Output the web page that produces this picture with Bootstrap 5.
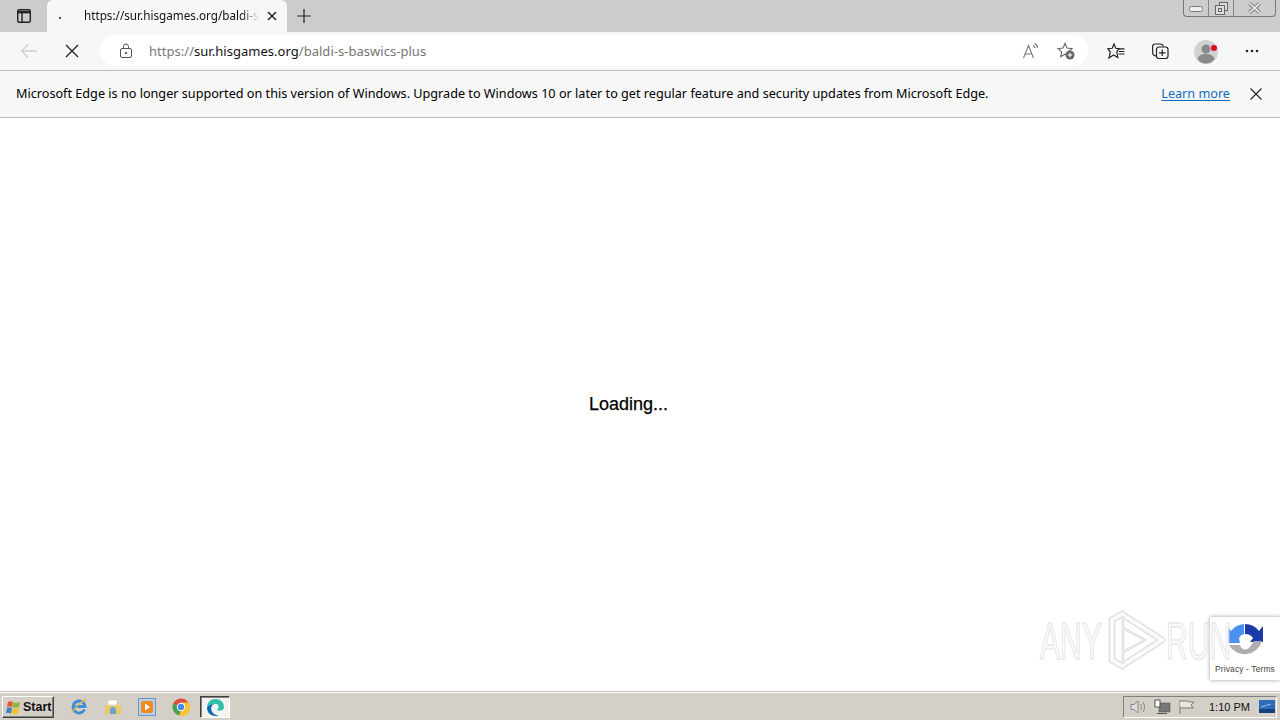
<!doctype html>
<html lang="en"><head><meta charset="utf-8"><title>Loading</title>
<link rel="stylesheet" href="https://cdn.jsdelivr.net/npm/bootstrap@5.3.0/dist/css/bootstrap.min.css">
<style>
html,body{height:720px;overflow:hidden;background:#fff}
body{font-family:"Noto Sans",sans-serif;color:#000}
.shell{height:720px}
.tabstrip{height:32px;background:#ccc;flex:none}
.sideicon{width:47px;flex:none}
.edgetab{width:240px;height:32px;background:#f7f7f7;border-radius:6px 6px 0 0;font-size:11.7px;padding:0 9px 0 12px;flex:none}
.tabdot{width:2px;height:2px;background:#555;margin-top:4px;flex:none}
.tabtitle{width:175px;margin-left:23px;white-space:nowrap;color:#111;-webkit-mask-image:linear-gradient(90deg,#000 90%,transparent);mask-image:linear-gradient(90deg,#000 90%,transparent);line-height:16px;margin-top:-2px}
.tabplus{margin-left:9px}
.winbtns{margin-left:auto;margin-right:4px;height:17px;width:93px;border:1px solid #777;border-top:0;border-radius:0 0 4px 4px;align-self:flex-start;flex:none}
.winbtns>div{border-right:1px solid #888}
.winbtns>div:last-child{border:0}
.toolbar{height:39px;background:#f7f7f7;border-bottom:1px solid #bdbdbd;flex:none;position:relative}
.navbtn{width:38px;flex:none}
.stopbtn{width:51px;padding-left:17px}
.addr{position:absolute;left:100px;top:3px;width:988px;height:31px;background:#fff;border-radius:15.5px;font-size:13px;padding-left:19px}
.urltxt{margin-left:16px;margin-top:2px;color:#767676;letter-spacing:.03px;white-space:nowrap}
.urlhost{color:#111}
.addrend{margin-left:auto;gap:17px;padding-right:13px}
.tools{position:absolute;left:1104px;top:0;height:38px;width:176px}
.slot{position:absolute}
.infobar{height:47px;background:#f7f7f7;border-bottom:1px solid #bdbdbd;font-size:12.65px;padding:0 18px 0 16px;flex:none}
.infotxt,.learn{margin-top:-2px}
.learn{color:#0f6cbd;margin-left:auto;margin-right:20px;text-underline-offset:2px}
.pagearea{flex:1 1 auto;position:relative;padding:0 23px 2px 0}
.loadtxt{font-family:"Liberation Sans",sans-serif;font-size:18px;line-height:22px;-webkit-text-stroke:.25px #000}
.wmark{position:absolute;left:1036px;top:490px;width:200px;height:64px;font-family:"Liberation Sans",sans-serif}
.wtxt{position:absolute;top:13px;font-size:52px;line-height:40px;color:rgba(248,248,248,.6);-webkit-text-stroke:2px rgba(228,228,228,.72);transform:scaleX(.58);transform-origin:0 0;white-space:nowrap}
.wtri{position:absolute;left:72px;top:2px}
.rcap{position:absolute;right:0;bottom:12px;width:70px;height:63px;background:#fff;box-shadow:0 0 4px rgba(0,0,0,.4);font-family:"Liberation Sans",sans-serif;font-size:8.5px;color:#444;padding-top:6px}
.rcap span{margin-top:3px;letter-spacing:.1px;line-height:10px}
.taskbar{height:28px;background:#d4d0c8;border-top:1px solid #fff;box-shadow:0 -1px 0 #c9c5bc;flex:none;font-family:"Liberation Sans",sans-serif}
.startbtn{margin:3px 0 0 2px;width:52px;height:22px;background:#d4d0c8;border:1px solid;border-color:#fff #404040 #404040 #fff;box-shadow:inset -1px -1px 0 #808080;font-weight:700;font-size:12.5px;padding-left:2px;gap:2px;color:#111}
.quick{margin-left:16px;gap:16px;padding-top:1px}
.quick>svg{flex:none}
.activeapp{width:30px;height:22px;margin-left:-6px;background:#f4f2ee;border:1px solid;border-color:#404040 #fff #fff #404040;box-shadow:inset 1px 1px 0 #808080}
.tray{margin-left:auto;margin-right:3px;margin-top:3px;height:22px;width:154px;border:1px solid;border-color:#808080 #fff #fff #808080;font-size:11px;position:relative;color:#111}
.tray>*{position:absolute}
</style></head>
<body>
<div class="shell d-flex flex-column">
  <div class="tabstrip d-flex align-items-center">
    <div class="sideicon d-flex justify-content-center">
      <svg width="16" height="16" viewBox="0 0 16 16" fill="none" stroke="#222" stroke-width="1.4"><rect x="1.7" y="1.7" width="12.6" height="12.6" rx="1.5"/><path d="M1.7 4.2h12.6" stroke-width="2.4"/><path d="M6 4v10"/></svg>
    </div>
    <div class="edgetab d-flex align-items-center">
      <span class="tabdot"></span>
      <span class="tabtitle">https://sur.hisgames.org/baldi-s</span>
      <svg class="ms-auto" width="12" height="12" viewBox="0 0 12 12" stroke="#222" stroke-width="1.5"><path d="M2 2l8 8M10 2l-8 8"/></svg>
    </div>
    <svg class="tabplus" width="16" height="16" viewBox="0 0 16 16" stroke="#222" stroke-width="1.2"><path d="M8 1v14M1 8h14"/></svg>
    <div class="winbtns d-flex">
      <div class="d-flex justify-content-center align-items-end pb-1" style="width:25px"><svg width="14" height="6" viewBox="0 0 14 6"><rect x=".5" y=".5" width="13" height="5" rx="2" fill="#eee" stroke="#777"/></svg></div>
      <div class="d-flex justify-content-center align-items-center" style="width:25px"><svg width="13" height="13" viewBox="0 0 13 13" fill="#ddd" stroke="#666"><rect x="4.5" y=".5" width="8" height="8"/><rect x=".5" y="3.5" width="9" height="9"/><rect x="3.5" y="6.5" width="3" height="3"/></svg></div>
      <div class="d-flex justify-content-center align-items-center flex-grow-1"><svg width="15" height="12" viewBox="0 0 15 12" stroke="#6a6a6a" stroke-width="3.6"><path d="M2.500 1.500l10 9M12.500 1.500l-10 9"/><path d="M2.500 1.500l10 9M12.500 1.500l-10 9" stroke="#e6e6e6" stroke-width="1.800"/></svg></div>
    </div>
  </div>
  <div class="toolbar d-flex align-items-center">
    <div class="navbtn d-flex justify-content-end"><svg width="18" height="16" viewBox="0 0 18 16" fill="none" stroke="#d0d0d0" stroke-width="1.3"><path d="M17 8H1.5M8 1.5L1.5 8 8 14.5"/></svg></div>
    <div class="stopbtn d-flex justify-content-center"><svg width="14" height="14" viewBox="0 0 14 14" stroke="#222" stroke-width="1.3"><path d="M1 1l12 12M13 1L1 13"/></svg></div>
    <div class="addr d-flex align-items-center">
      <svg width="14" height="16" viewBox="0 0 14 16" fill="none" stroke="#555"><rect x="1.5" y="5.5" width="11" height="9" rx="1.5"/><path d="M4.5 5.5V3.5a2.5 2.5 0 0 1 5 0v2"/><circle cx="7" cy="10" r=".8" fill="#555"/></svg>
      <span class="urltxt">https://<span class="urlhost">sur.hisgames.org</span>/baldi-s-baswics-plus</span>
      <div class="addrend d-flex align-items-center">
        <svg width="18" height="18" viewBox="0 0 18 18" fill="none" stroke="#777" stroke-width="1.1"><path d="M1.5 16L6.5 3.5 11.5 16M3.2 12h6.6"/><path d="M11 3.5a3 3 0 0 1 2 2.5M12.5 1.5a5 5 0 0 1 3 4.5"/></svg>
        <svg width="18" height="18" viewBox="0 0 18 18" fill="none" stroke="#666" stroke-width="1.1"><path d="M8 1.5l2 4.6 5 .5-3.7 3.3 1 4.8-4.3-2.500-4.300 2.500 1-4.800L1 6.600l5-.5z"/><circle cx="13" cy="13" r="4.500" fill="#666" stroke="none"/><path d="M13 10.800v4.400M10.800 13h4.400" stroke="#fff"/></svg>
      </div>
    </div>
    <div class="tools">
      <svg class="slot" style="left:3px;top:10px" width="18" height="18" viewBox="0 0 18 18" fill="none" stroke="#222" stroke-width="1.2"><path d="M7 2L8.800 6.300 12.200 6.800 9.800 10 10.800 15.500 6.500 13 2 16 3.300 10 .8 6.700 5.200 6.300z"/><path d="M12 6.800h5.500M12 9.500h5.500M11.500 12h6"/></svg>
      <svg class="slot" style="left:47px;top:10px" width="18" height="18" viewBox="0 0 18 18" fill="none" stroke="#222" stroke-width="1.2"><path d="M5 14C3 13.800 2 13 1.800 11.500L1.500 5C1.500 3 2.500 2 4.500 2h5C11 2 12 2.800 12.500 4.500"/><rect x="5.500" y="5" width="11.500" height="11.500" rx="2.500" fill="#f7f7f7"/><path d="M11.200 7.500v6.500M8 10.800h6.500"/></svg>
      <svg class="slot" style="left:90px;top:8px" width="24" height="24" viewBox="0 0 24 24"><circle cx="12" cy="12" r="12" fill="#cfd4d2"/><circle cx="12" cy="9" r="4.500" fill="#8a8a8a"/><path d="M3.500 19c1-4 4.500-5 8.500-5s7.500 1 8.500 5c-2 3-5 4.500-8.500 4.500S5.500 22 3.500 19z" fill="#8a8a8a"/><circle cx="20" cy="8" r="3" fill="#e00b1c"/></svg>
      <svg class="slot" style="left:141px;top:17px" width="14" height="4" viewBox="0 0 14 4" fill="#222"><circle cx="2" cy="2" r="1.300"/><circle cx="7" cy="2" r="1.300"/><circle cx="12" cy="2" r="1.300"/></svg>
    </div>
  </div>
  <div class="infobar d-flex align-items-center">
    <span class="infotxt">Microsoft Edge is no longer supported on this version of Windows. Upgrade to Windows 10 or later to get regular feature and security updates from Microsoft Edge.</span>
    <a class="learn" href="#">Learn more</a>
    <svg width="12" height="12" viewBox="0 0 12 12" stroke="#222" stroke-width="1.100"><path d="M.5.5l11 11M11.500.5l-11 11"/></svg>
  </div>
  <main class="pagearea d-flex align-items-center justify-content-center">
    <div class="loadtxt">Loading...</div>
    <div class="rcap d-flex flex-column align-items-center">
      <svg width="38" height="38" viewBox="0 0 38 38">
        <path d="M19 1A18 18 0 0 1 33 8L37 3V19H24L27 15A9 9 0 0 0 19 11z" fill="#1c3aa9"/>
        <path d="M18 1A18 18 0 0 0 5 8L2 4V20H14L13 15A7 7 0 0 1 18 11z" fill="#4a90f0"/>
        <path d="M3 22H14C15 27 21 28 24 24L28 18H36A18 18 0 0 1 3 22z" fill="#aeaeae"/>
      </svg>
      <span>Privacy - Terms</span>
    </div>
    <div class="wmark">
      <span class="wtxt" style="left:4px">ANY</span>
      <svg class="wtri" width="58" height="60" viewBox="0 0 58 60" fill="none"><path d="M4 10L14 4l40 26-40 26L4 50z" stroke="#e4e4e4" stroke-width="7"/><path d="M4 10L14 4l40 26-40 26L4 50z" stroke="#fbfbfb" stroke-width="3.500"/><path d="M15 6v48M15 18l22 12-22 12z" stroke="#e6e6e6" stroke-width="3"/></svg>
      <span class="wtxt" style="left:130px">RUN</span>
    </div>
  </main>
  <div class="taskbar d-flex">
    <div class="startbtn d-flex align-items-center">
      <svg width="16" height="15" viewBox="0 0 16 15"><path d="M3 2C4.500 1 6 1 8 2L7 7C5 6 3.500 6 2 7z" fill="#e8562a"/><path d="M8.500 2.200C10.500 3 12.500 3 15 2L14 7c-2.500 1-4.500 1-6.500.2z" fill="#86b93a"/><path d="M2 8C3.500 7 5 7 7 8L6 13.500C4 12.500 2.500 12.500 1 13.500z" fill="#3d7fd0"/><path d="M7.500 8.300c2 .8 4 .8 6.500-.2L13 13.500c-2.500 1-4.500 1-6.500.2z" fill="#f5c02a"/></svg>
      Start
    </div>
    <div class="quick d-flex align-items-center">
      <svg width="18" height="18" viewBox="0 0 18 18" fill="none"><path d="M14.500 11.500A6 6 0 1 1 15 8.500H4" stroke="#3c8fd8" stroke-width="2.800"/><path d="M1.500 15C4 11 11 3 16.500 1.500" stroke="#e3b84a" stroke-width="1.300"/></svg>
      <svg width="18" height="18" viewBox="0 0 18 18"><path d="M2 4h5l2 2h7v10H2z" fill="#f0d78c"/><rect x="4" y="2" width="9" height="5" fill="#fff" stroke="#bbb" stroke-width=".5"/><path d="M1 8h16v8H1z" fill="#e9c96c"/><path d="M6 16v-4a3 3 0 0 1 6 0v4z" fill="#6ba4c8"/></svg>
      <svg width="18" height="18" viewBox="0 0 18 18"><rect x=".5" y=".5" width="17" height="17" fill="#b9cfe8" stroke="#6e94c4"/><rect x="3" y="3" width="12" height="12" rx="2" fill="#f08a1c"/><path d="M7 5.500l5 3.500-5 3.500z" fill="#fff"/></svg>
      <svg width="18" height="18" viewBox="0 0 18 18"><circle cx="9" cy="9" r="8.500" fill="#dd4b3e"/><path d="M9 9L1.500 5.500A8.500 8.500 0 0 0 7 17.300z" fill="#3fa652"/><path d="M9 4.500h7.800A8.500 8.500 0 0 1 7 17.300L10 10z" fill="#f6c530"/><circle cx="9" cy="9" r="4.200" fill="#fff"/><circle cx="9" cy="9" r="3.200" fill="#4a8af0"/></svg>
      <div class="activeapp d-flex align-items-center justify-content-center">
        <svg width="19" height="19" viewBox="0 0 18 18"><path d="M1 9.500C1 4 4.500 1 9 1c4.500 0 8 3 8 7.500 0 2.500-2 3.500-4 3.500-1.500 0-3-.5-3-1 1.500-.5 2-1.500 2-2.500C12 6.500 10.500 5.500 8.500 5.500 5.500 5.500 1.500 7 1 9.500z" fill="#2fc0a8"/><path d="M1 9.500c.5-2.500 4.500-4 7.500-4C6 6 4.500 8.500 5 11c.6 3.500 4 6 7.500 5.300C11.300 16.800 10.200 17 9 17c-4.500 0-8-3-8-7.500z" fill="#0c6bb8"/></svg>
      </div>
    </div>
    <div class="tray">
      <svg style="left:5px;top:2px" width="18" height="16" viewBox="0 0 18 16" fill="none" stroke="#888"><path d="M2 5.500h3L9 2v12L5 10.500H2z" fill="#ddd"/><path d="M11.500 5c1 2 1 4 0 6M14 3c2 3 2 7 0 10"/></svg>
      <svg style="left:30px;top:2px" width="18" height="16" viewBox="0 0 18 16"><rect x="5" y="4" width="11" height="9" fill="#777" stroke="#444" stroke-width=".5"/><rect x="1" y="1" width="5" height="7" fill="#fff" stroke="#555"/><path d="M3 14.500h10" stroke="#555"/></svg>
      <svg style="left:54px;top:2px" width="17" height="16" viewBox="0 0 17 16" fill="#e8e6df" stroke="#777"><path d="M2 1v14"/><path d="M2 2h8l1 1h5l-3 3 2 3H4L2 8"/></svg>
      <span style="left:85px;top:3px;line-height:14px">1:10 PM</span>
      <svg style="left:135px;top:3px" width="16" height="14" viewBox="0 0 16 14"><rect width="16" height="13" fill="#2f6cb8"/><path d="M0 9h16v4H0z" fill="#173f78"/><path d="M2 7l10-3" stroke="#9cc6ee"/></svg>
    </div>
  </div>
</div>
</body></html>
